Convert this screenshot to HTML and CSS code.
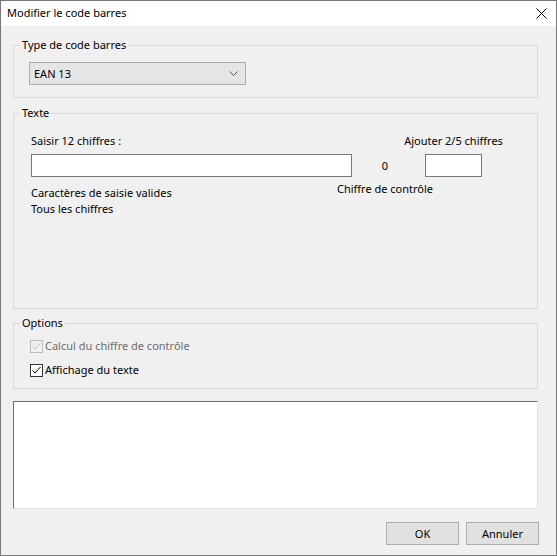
FILE: index.html
```html
<!DOCTYPE html>
<html lang="fr">
<head>
<meta charset="utf-8">
<title>Modifier le code barres</title>
<link rel="stylesheet" href="styles.css">
</head>
<body>
<div class="window">
  <div class="titlebar">
    <span class="title">Modifier le code barres</span>
    <svg class="close" width="11" height="11" viewBox="0 0 11 11"><path d="M0.5 0.5 L10.5 10.5 M10.5 0.5 L0.5 10.5" stroke="#000" stroke-width="1" fill="none"/></svg>
  </div>
  <div class="content">
    <fieldset class="group g-type">
      <legend>Type de code barres</legend>
      <div class="inner">
        <div class="combo">
          <span>EAN 13</span>
          <svg class="chev" width="9" height="5" viewBox="0 0 9 5"><path d="M0.5 0.5 L4.5 4.5 L8.5 0.5" stroke="#555" stroke-width="1" fill="none"/></svg>
        </div>
      </div>
    </fieldset>

    <fieldset class="group g-text">
      <legend>Texte</legend>
      <div class="inner text-row">
        <div class="col-main">
          <div class="line">Saisir 12 chiffres :</div>
          <div class="input input-main"></div>
          <div class="line caption-main">Caractères de saisie valides</div>
          <div class="line">Tous les chiffres</div>
        </div>
        <div class="col-check">
          <div class="line spacer"></div>
          <div class="digit">0</div>
          <div class="line caption-check">Chiffre de contrôle</div>
        </div>
        <div class="col-add">
          <div class="line nowrap">Ajouter 2/5 chiffres</div>
          <div class="input input-add"></div>
        </div>
      </div>
    </fieldset>

    <fieldset class="group g-options">
      <legend>Options</legend>
      <div class="inner options">
        <label class="check disabled">
          <span class="box"><svg width="11" height="11" viewBox="0 0 11 11"><path d="M1.5 5.5 L4 8 L9.5 2" stroke="#bcbcbc" stroke-width="1" fill="none"/></svg></span>
          <span>Calcul du chiffre de contrôle</span>
        </label>
        <label class="check">
          <span class="box"><svg width="11" height="11" viewBox="0 0 11 11"><path d="M1.5 5.5 L4 8 L9.5 2" stroke="#000" stroke-width="1" fill="none"/></svg></span>
          <span>Affichage du texte</span>
        </label>
      </div>
    </fieldset>

    <div class="preview"></div>

    <div class="buttons">
      <div class="btn">OK</div>
      <div class="btn">Annuler</div>
    </div>
  </div>
</div>
</body>
</html>
```

FILE: styles.css
```css
html, body {
  margin: 0;
  padding: 0;
  background: #f0f0f0;
}
body {
  font-family: "Noto Sans", "Open Sans", "DejaVu Sans", sans-serif;
  font-size: 11px;
  line-height: 16px;
  color: #000;
}
.window {
  width: 557px;
  height: 556px;
  box-sizing: border-box;
  border: 1px solid #777777;
  display: flex;
  flex-direction: column;
  background: #f0f0f0;
}
.titlebar {
  height: 25px;
  background: #ffffff;
  display: flex;
  align-items: center;
  justify-content: space-between;
  padding: 0 9px 0 6px;
  flex: none;
}
.title {
  line-height: 16px;
  margin-top: -1px;
}
.close {
  display: block;
}
.content {
  flex: 1;
  display: flex;
  flex-direction: column;
  padding: 11px 18px 0 12px;
}
.group {
  margin: 0;
  padding: 0;
  border: 1px solid #dadada;
  min-width: 0;
}
.group legend {
  padding: 0 2px;
  margin-left: 6px;
  line-height: 16px;
}
.g-type .inner {
  padding: 9px 0 12px 15px;
}
.combo {
  height: 21px;
  border: 1px solid #adadad;
  background: #e5e5e5;
  display: flex;
  align-items: center;
  justify-content: space-between;
  padding: 0 7px 0 4px;
  width: 204px;
}
.combo span {
  line-height: 16px;
}
.chev {
  display: block;
}
.g-text {
  margin-top: 7px;
  height: 204px;
  box-sizing: border-box;
}
.text-row {
  display: flex;
  padding: 12px 0 0 17px;
}
.line {
  line-height: 16px;
  height: 16px;
}
.nowrap {
  white-space: nowrap;
}
.col-main {
  width: 321px;
  display: flex;
  flex-direction: column;
}
.input {
  height: 21px;
  border: 1px solid #7a7a7a;
  background: #fff;
  margin-top: 5px;
}
.input-main {
  width: 319px;
}
.caption-main {
  margin-top: 8px;
}
.col-check {
  width: 66px;
  display: flex;
  flex-direction: column;
  align-items: center;
}
.spacer {
  width: 1px;
}
.digit {
  height: 23px;
  margin-top: 5px;
  line-height: 23px;
}
.caption-check {
  margin-top: 4px;
  white-space: nowrap;
}
.col-add {
  width: 63px;
  margin-left: 4px;
  display: flex;
  flex-direction: column;
  align-items: center;
}
.input-add {
  width: 55px;
}
.g-options {
  margin-top: 6px;
}
.options {
  padding: 7px 0 10px 16px;
  display: flex;
  flex-direction: column;
  gap: 8px;
}
.check {
  display: flex;
  align-items: center;
  gap: 2px;
  line-height: 16px;
}
.box {
  width: 11px;
  height: 11px;
  border: 1px solid #333;
  background: #fff;
  display: block;
  flex: none;
}
.box svg {
  display: block;
}
.check.disabled {
  color: #6d6d6d;
}
.check.disabled .box {
  border-color: #bcbcbc;
  background: #f0f0f0;
}
.preview {
  margin-top: 12px;
  height: 106px;
  background: #fff;
  border-top: 1px solid #6e6e6e;
  border-left: 1px solid #6e6e6e;
  border-right: 1px solid #e3e3e3;
  border-bottom: 1px solid #e3e3e3;
}
.buttons {
  display: flex;
  justify-content: flex-end;
  gap: 7px;
  margin-top: 13px;
  margin-right: -1px;
}
.btn {
  width: 71px;
  height: 21px;
  border: 1px solid #adadad;
  background: #e1e1e1;
  text-align: center;
  line-height: 21px;
}
```
